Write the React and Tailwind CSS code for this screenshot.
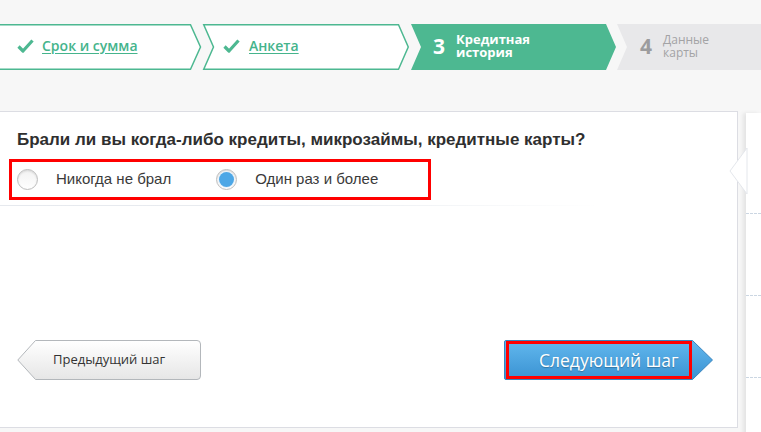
import React from 'react';

const GREEN = '#4db891';

function Check() {
  return (
    <svg width="17" height="14" viewBox="0 0 17 14" className="shrink-0">
      <path d="M1.5 7.5 L6 12 L15.5 1.5" fill="none" stroke={GREEN} strokeWidth="3.2" strokeLinejoin="round" />
    </svg>
  );
}

function Step({ width, points, fill, stroke, children, className = '' }) {
  return (
    <div className={`relative h-[46px] shrink-0 ${className}`} style={{ width }}>
      <svg className="absolute inset-0 overflow-visible" width={width} height="46">
        <polygon points={points} fill={fill} stroke={stroke || 'none'} strokeWidth="1.5" />
      </svg>
      <div className="relative flex h-full items-center pb-[3px]">{children}</div>
    </div>
  );
}

function Radio({ checked }) {
  return (
    <span className="flex h-[21px] w-[21px] shrink-0 items-center justify-center rounded-full border border-[#bdbdbd] bg-gradient-to-b from-[#f2f2f2] to-white shadow-[inset_0_1px_2px_rgba(0,0,0,0.12)]">
      {checked && <span className="h-[15px] w-[15px] rounded-full bg-[#4da7e6] shadow-[0_0_0_1px_#eaf3fa]" />}
    </span>
  );
}

export default function App() {
  return (
    <div className="h-[432px] w-[761px] overflow-hidden bg-[#f7f7f7] font-['Open_Sans',sans-serif]">
      {/* Steps */}
      <div className="flex pt-[24px]">
        <Step width={201} points="-3,0.75 190.5,0.75 200.5,23 190.5,45.25 -3,45.25" fill="#fff" stroke={GREEN}>
          <div className="flex items-center pl-[17px]">
            <Check />
            <a className="ml-[8px] text-[14px] font-semibold leading-[18px] text-[#45b48c] underline underline-offset-2">Срок и сумма</a>
          </div>
        </Step>
        <Step width={206} className="ml-[2px]" points="0.75,0.75 195.5,0.75 205.25,23 195.5,45.25 0.75,45.25 10.5,23" fill="#fff" stroke={GREEN}>
          <div className="flex items-center pl-[20px]">
            <Check />
            <a className="ml-[9px] text-[14px] font-semibold leading-[18px] text-[#45b48c] underline underline-offset-2">Анкета</a>
          </div>
        </Step>
        <Step width={205} className="ml-[2px]" points="0,0 195,0 205,23 195,46 0,46 10,23" fill={GREEN}>
          <div className="flex items-center pl-[22px] text-white">
            <span className="text-[21px] font-bold leading-[24px]">3</span>
            <div className="ml-[11px] text-[13px] font-bold leading-[13px]">
              <div>Кредитная</div>
              <div>история</div>
            </div>
          </div>
        </Step>
        <Step width={160} className="ml-[1px]" points="0,0 160,0 160,46 0,46 10,23" fill="#e8e8ea">
          <div className="flex items-center pl-[23px] text-[#a3a3a5]">
            <span className="text-[21px] font-bold leading-[24px] text-[#9c9c9e]">4</span>
            <div className="ml-[11px] text-[12px] leading-[13px]">
              <div>Данные</div>
              <div>карты</div>
            </div>
          </div>
        </Step>
      </div>

      {/* Body */}
      <div className="mt-[41px] flex">
        <div className="relative h-[317px] w-[738px] shrink-0 border-y border-r border-[#dcdde3] bg-white px-[9px] font-['Liberation_Sans',sans-serif]">
          <h2 className="mt-[18px] pl-[8px] text-[17px] font-bold leading-[20px] text-[#2f2f2f]">
            Брали ли вы когда-либо кредиты, микрозаймы, кредитные карты?
          </h2>
          <div className="mt-[9px] flex h-[41px] w-[422px] items-center border-[3px] border-[#ff0000] pl-[5px] text-[15px] text-[#3a3a3a]">
            <Radio />
            <span className="ml-[18px]">Никогда не брал</span>
            <span className="ml-[45px]"><Radio checked /></span>
            <span className="ml-[18px]">Один раз и более</span>
          </div>
          <div className="-ml-[9px] mt-[5px] h-px w-[600px] bg-gradient-to-r from-[#e6e9ee] via-[#e9ecf0] to-white" />

          <div className="mt-[134px] flex items-center justify-between pl-[8px] pr-[15px] font-['Open_Sans',sans-serif]">
            <button className="relative h-[40px] w-[184px]">
              <svg className="absolute inset-0" width="184" height="40">
                <defs>
                  <linearGradient id="pg" x1="0" y1="0" x2="0" y2="1">
                    <stop offset="0" stopColor="#ffffff" />
                    <stop offset="1" stopColor="#e6e6e6" />
                  </linearGradient>
                </defs>
                <path d="M18.5 0.5 H180 Q183.5 0.5 183.5 4 V36 Q183.5 39.5 180 39.5 H18.5 L0.8 20 Z" fill="url(#pg)" stroke="#b3b7bb" />
              </svg>
              <span className="relative block pl-[36px] text-left text-[13px] text-[#333]">Предыдущий шаг</span>
            </button>
            <button className="relative h-[40px] w-[209px]">
              <svg className="absolute inset-0" width="209" height="40">
                <defs>
                  <linearGradient id="ng" x1="0" y1="0" x2="0" y2="1">
                    <stop offset="0" stopColor="#62b8ee" />
                    <stop offset="1" stopColor="#3a92d2" />
                  </linearGradient>
                </defs>
                <path d="M2 0.5 H188.5 L208.5 20 L188.5 39.5 H2 Q0.5 39.5 0.5 38 V2 Q0.5 0.5 2 0.5 Z" fill="url(#ng)" stroke="#3a85be" />
              </svg>
              <span className="absolute left-[2px] top-[1px] h-[38px] w-[186px] border-[3px] border-[#ff0000]" />
              <span className="relative block pl-[35px] text-left text-[17.5px] text-white [text-shadow:0_1px_1px_rgba(0,0,0,0.25)]">Следующий шаг</span>
            </button>
          </div>
        </div>

        {/* Sidebar */}
        <div className="relative ml-[8px] mt-[2px] h-[330px] flex-1 bg-white shadow-[-3px_0_4px_rgba(0,0,0,0.08)]">
          <svg className="absolute -left-[17px] top-[35px] overflow-visible" width="18" height="48">
            <polygon points="18,0 1,23 18,46" fill="#fff" stroke="#e4e7ec" strokeWidth="1" />
          </svg>
          <div className="mt-[100px] border-t border-dashed border-[#cbd6e2]" />
          <div className="mt-[81px] border-t border-dashed border-[#cbd6e2]" />
          <div className="mt-[81px] border-t border-dashed border-[#cbd6e2]" />
        </div>
      </div>
    </div>
  );
}
